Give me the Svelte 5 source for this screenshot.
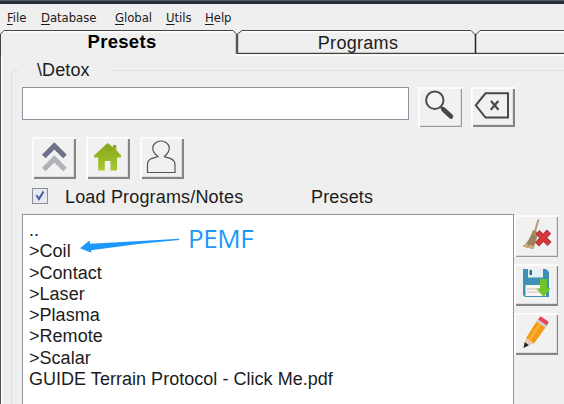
<script>
    const menus = [
        { name: "File", width: 34 },
        { name: "Database", width: 74 },
        { name: "Global", width: 51 },
        { name: "Utils", width: 39 },
        { name: "Help", width: 40 },
    ];

    const entries = [
        "..",
        ">Coil",
        ">Contact",
        ">Laser",
        ">Plasma",
        ">Remote",
        ">Scalar",
        "GUIDE Terrain Protocol - Click Me.pdf",
    ];

    let search = "";
    let loadNotes = true;
    let selected = "";
</script>

<div class="window">
    <div class="titlebar"></div>
    <nav class="menubar">
        {#each menus as menu}
            <span style="width:{menu.width}px"><u>{menu.name[0]}</u>{menu.name.slice(1)}</span>
        {/each}
    </nav>

    <div class="tabs">
        <svg class="tab-lines" width="564" height="28" viewBox="0 0 564 28">
            <path d="M4 3.5H233M242 3.5H472M480 3.5H564" stroke="#fff" stroke-width="2" fill="none" />
            <path d="M0.5 28V6L4 2.5H233L237 6.5" stroke="#444" fill="none" />
            <path d="M237 6V26" stroke="#555" stroke-width="2.4" />
            <path d="M237 6.5L242 2.5H471L475.5 7L480 2.5H564" stroke="#444" fill="none" />
            <path d="M475.5 6V25" stroke="#222" stroke-width="1.5" />
            <path d="M238 25.5H564" stroke="#444" stroke-width="1.4" />
            <path d="M236 27.2H564" stroke="#fff" stroke-width="1.8" />
        </svg>
        <div class="tab active"><span>Presets</span></div>
        <div class="tab"><span>Programs</span></div>
    </div>

    <main>
        <fieldset>
            <legend>\Detox</legend>

            <div class="search-row">
                <input type="text" bind:value={search} />
                <button class="flat" aria-label="Search">
                    <svg width="43" height="40" viewBox="0 0 43 40">
                        <path d="M23 20L33 30" stroke="#484848" stroke-width="2.5" />
                        <path d="M25.5 22.5L33 29.5" stroke="#484848" stroke-width="4.6" stroke-linecap="round" />
                        <circle cx="16.8" cy="13.2" r="8.7" fill="#f5f5f5" stroke="#4c4c4c" stroke-width="2" />
                    </svg>
                </button>
                <button aria-label="Clear">
                    <svg width="43" height="40" viewBox="0 0 43 40" fill="none" stroke="#484848">
                        <path d="M14.5 6.3H37V30.5H14.5L4.8 18.3Z" stroke-width="2" />
                        <path d="M20 14L27.5 22.7M27.3 14L19.8 22.7" stroke-width="2.2" />
                    </svg>
                </button>
            </div>

            <div class="nav-row">
                <button aria-label="Up">
                    <svg width="44" height="42" viewBox="0 0 44 42" fill="none" stroke-width="5.2">
                        <path d="M11.8 32.5L22.3 22L33 32.5" stroke="#b2b2b9" />
                        <path d="M11.8 19.5L22.3 9L33 19.5" stroke="#6b7287" />
                    </svg>
                </button>
                <button aria-label="Home">
                    <svg width="44" height="42" viewBox="0 0 44 42">
                        <defs>
                            <linearGradient id="leaf" x2="0" y2="1">
                                <stop stop-color="#87a51c" />
                                <stop offset="1" stop-color="#a8c832" />
                            </linearGradient>
                        </defs>
                        <path d="M21.5 6L27 10.2V8H30.3V13L35 18.5V20.5H31V33.5H24.5V24H18.8V33.5H12.2V20.5H8V18.5Z" fill="url(#leaf)" />
                    </svg>
                </button>
                <button aria-label="User">
                    <svg width="44" height="42" viewBox="0 0 44 42" fill="none" stroke="#555" stroke-width="1.2">
                        <path d="M18 19.5C14 16.5 12.5 13 12.8 10.5C13.3 6.5 17 4 21 4C25 4 28.7 6.5 29.2 10.5C29.5 13 28 16.5 24.3 19.5C26.5 21.3 34.5 20 35 27V35.5H7.5V27C8 20 15.5 21.3 18 19.5Z" />
                    </svg>
                </button>
            </div>

            <div class="check-row">
                <label>
                    <input type="checkbox" bind:checked={loadNotes} />
                    <span class="box">
                        {#if loadNotes}
                            <svg width="12" height="12" viewBox="0 0 12 12">
                                <path d="M2.5 5.2L5 9L9.5 1.5" fill="none" stroke="#445faa" stroke-width="2" />
                            </svg>
                        {/if}
                    </span>
                    <span class="label-text">Load Programs/Notes</span>
                </label>
                <span class="label-text">Presets</span>
            </div>

            <div class="list-row">
                <div class="list">
                    {#each entries as entry}
                        <div class="entry" on:dblclick={() => (selected = entry)} role="option" aria-selected={selected === entry} tabindex="-1">{entry}</div>
                    {/each}
                    <div class="note">
                        <svg width="102" height="16" viewBox="0 0 102 16">
                            <path d="M0 10.3L9.5 2.5L10 5.7Q55 3.5 99 0.8Q100 1.5 99 2Q55 5.5 11 12.3L11.5 14.8Z" fill="#1e98fb" />
                        </svg>
                        <span>PEMF</span>
                    </div>
                </div>
                <div class="side">
                    <button class="flat" aria-label="Clear list">
                        <svg width="43" height="42" viewBox="0 0 43 42">
                            <path d="M24.5 4.5L20.8 17" stroke="#b69c79" stroke-width="2" />
                            <path d="M19 15L24.8 17.5L22 25.5L19.5 34L8.5 31.5Q15 27 19 15Z" fill="#a78a65" />
                            <path d="M8.5 31.5L19.5 34L20.5 31L12 28.5Z" fill="#c7ad78" />
                            <path d="M18.5 20L14 31M21 21L17.5 31" stroke="#806951" stroke-width="0.8" />
                            <path d="M23.5 17L35.5 29M35 16.5L23 29.5" stroke="#a9363d" stroke-width="5.8" />
                            <path d="M24 17.5L35 28.5M34.5 17L23.5 29" stroke="#d7363b" stroke-width="4" />
                        </svg>
                    </button>
                    <button class="low" aria-label="Save">
                        <svg width="43" height="42" viewBox="0 0 43 42">
                            <path d="M9 5H32L35 8V33H11L9 31Z" fill="#3e91b6" />
                            <path d="M14 5H29V13.5H14Z" fill="#e5f1f5" />
                            <path d="M15.5 6H18V11H15.5Z" fill="#286f9b" />
                            <path d="M11.5 21H32V32H11.5Z" fill="#f8f5f3" />
                            <path d="M13 25H27M13 28H27" stroke="#c9bcb8" />
                            <path d="M26 15H33V24.5H36.5L29.6 33L22.5 24.5H26Z" fill="#70c526" />
                        </svg>
                    </button>
                    <button class="low" aria-label="Edit">
                        <svg width="43" height="42" viewBox="0 0 43 42">
                            <path d="M22.5 8.5L31.5 14.5L20 30.5L12 25Z" fill="#f39a17" />
                            <path d="M26 11L15.5 27" stroke="#ffae2d" stroke-width="3" />
                            <path d="M12 25L20 30.5L9.8 34.5Z" fill="#e9cab0" />
                            <path d="M10.7 29L14.8 32.2L9.5 35Z" fill="#222" />
                            <path d="M22.5 8.5L24 6.5L33 12.5L31.5 14.5Z" fill="#c8ced0" />
                            <path d="M24 6.5L26.5 3.3L34.7 8.7L33 12.5Z" fill="#e34750" />
                        </svg>
                    </button>
                </div>
            </div>
        </fieldset>
    </main>
</div>

<style>
    .window {
        width: 564px;
        height: 404px;
        overflow: hidden;
        background: #efefef;
        color: #1c1c1c;
        font-family: "Liberation Sans", Arial, sans-serif;
        font-size: 18px;
        display: flex;
        flex-direction: column;
    }
    .titlebar {
        height: 4px;
        flex: none;
        box-sizing: border-box;
        background: #292d3b;
        border-top: 1px solid #555966;
    }
    .menubar {
        display: flex;
        flex: none;
        height: 24px;
        padding-left: 7px;
        line-height: 27px;
        font-family: "DejaVu Sans Condensed", "DejaVu Sans", sans-serif;
        font-stretch: condensed;
        font-size: 13px;
        letter-spacing: -0.05px;
        white-space: nowrap;
    }
    .menubar u {
        text-underline-offset: 2px;
    }
    .tabs {
        position: relative;
        display: flex;
        flex: none;
        height: 28px;
    }
    .tab-lines {
        position: absolute;
        left: 0;
        top: 0;
    }
    .tab {
        width: 238px;
        padding-top: 5px;
        line-height: 20px;
        text-align: center;
        letter-spacing: 0.3px;
        z-index: 1;
    }
    .tab span {
        display: inline-block;
        padding-left: 4px;
    }
    .active {
        width: 237px;
        padding-top: 4px;
        font-size: 18.5px;
        font-weight: bold;
        color: #000;
    }
    .active span {
        padding-left: 7px;
    }
    main {
        flex: 1;
        padding: 4px 0 0 10px;
        border-left: 1px solid #555;
        box-shadow: inset 2px 0 #fafafa;
        min-height: 0;
    }
    fieldset {
        margin: 0;
        height: 380px;
        min-width: 0;
        border: 1px solid #dce3e7;
        border-right: none;
        border-radius: 4px 0 0 0;
        padding: 7px 0 0 10px;
    }
    legend {
        width: 91px;
        box-sizing: border-box;
        margin-left: -3px;
        padding: 0 0 0 18px;
        line-height: 20px;
        letter-spacing: 0.1px;
    }
    button {
        flex: none;
        box-sizing: border-box;
        width: 44px;
        height: 42px;
        padding: 0;
        border: none;
        background: #f1f1f1;
        box-shadow: inset 2px 2px #fcfcfc, inset -2px -2px #858585, inset -3px -3px #dedede;
    }
    button.flat {
        box-shadow: inset 2px 2px #fcfcfc, inset -1px -1px #999, inset -2px -2px #ddd;
    }
    button.low {
        box-shadow: inset 2px 2px #fcfcfc, inset -1px -2px #858585, inset -2px -3px #dedede;
    }
    button svg {
        display: block;
    }
    .search-row {
        display: flex;
        height: 50px;
    }
    .search-row input {
        box-sizing: border-box;
        width: 387px;
        height: 33px;
        margin: 0 9px 0 0;
        border: 1px solid #92929f;
        background: #fff;
    }
    .search-row button {
        height: 40px;
        margin-right: 9px;
    }
    .nav-row {
        display: flex;
        gap: 10px;
        height: 50px;
        padding-left: 10px;
    }
    .check-row {
        display: flex;
        height: 27px;
        padding-left: 10px;
        line-height: 20px;
    }
    .check-row label {
        display: flex;
        width: 279px;
    }
    .label-text {
        letter-spacing: 0.17px;
    }
    .check-row input {
        position: absolute;
        opacity: 0;
    }
    .box {
        width: 12px;
        height: 12px;
        margin: 1px 17px 0 0;
        border: 1px solid #8c8f94;
        padding: 1px;
        background: #e6e9f1;
    }
    .box svg {
        display: block;
    }
    .list-row {
        display: flex;
        height: 200px;
    }
    .list {
        position: relative;
        box-sizing: border-box;
        width: 492px;
        padding: 5px 0 0 6px;
        border: 1px solid #92929d;
        background: #fff;
    }
    .entry {
        line-height: 21.25px;
        letter-spacing: 0.03px;
        white-space: nowrap;
    }
    .note {
        position: absolute;
        left: 57px;
        top: 8px;
        display: flex;
        color: #1e98fb;
    }
    .note svg {
        margin-top: 15px;
    }
    .note span {
        margin-left: 6px;
        font-family: "Open Sans", "Noto Sans", sans-serif;
        font-size: 26px;
        line-height: 31px;
        letter-spacing: -0.4px;
    }
    .side {
        display: flex;
        flex-direction: column;
        gap: 7px;
        padding-top: 1px;
    }
</style>
